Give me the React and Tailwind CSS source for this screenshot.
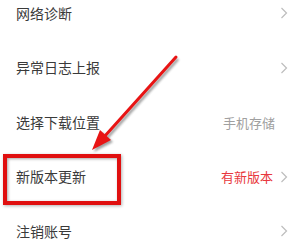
import React from "react";

const rows = [
  { label: "网络诊断" },
  { label: "异常日志上报" },
  { label: "选择下载位置", value: "手机存储", noArrow: true },
  { label: "新版本更新", value: "有新版本", red: true },
  { label: "注销账号" },
];

const Chevron = () => (
  <svg width="8" height="12" viewBox="0 0 8 12" className="ml-[7px] shrink-0">
    <path d="M1.5 1 L6.5 6 L1.5 11" fill="none" stroke="#bdbdbd" strokeWidth="1.2" />
  </svg>
);

export default function App() {
  return (
    <div
      className="relative w-[299px] h-[248px] overflow-hidden bg-white"
      style={{ fontFamily: '"Noto Sans CJK SC", "Noto Sans", sans-serif' }}
    >
      <div className="-mt-[14px]">
        {rows.map((row) => (
          <div key={row.label} className="h-[54.5px] flex items-center pl-[16px] pr-[11px]">
            <span className="flex-1 text-[14px] text-[#3a3a3a]">{row.label}</span>
            {row.value && (
              <span className={`text-[13px] ${row.red ? "text-[#e8383d]" : "text-[#a0a0a0]"}`}>
                {row.value}
              </span>
            )}
            {row.noArrow ? <span className="w-[13px]" /> : <Chevron />}
          </div>
        ))}
      </div>

      {/* annotation box */}
      <div className="absolute left-[3px] top-[154px] w-[118px] h-[51px] border-[4px] border-[#e01010] shadow-[inset_1px_1px_3px_rgba(0,0,0,0.35),1px_1px_3px_rgba(0,0,0,0.3)]" />

      {/* annotation arrow */}
      <svg className="absolute left-0 top-0" width="299" height="248" viewBox="0 0 299 248">
        <defs>
          <filter id="sh" x="-20%" y="-20%" width="140%" height="140%">
            <feGaussianBlur stdDeviation="1.2" />
          </filter>
        </defs>
        <g transform="translate(2 2)" opacity="0.45" filter="url(#sh)">
          <line x1="176" y1="57" x2="104" y2="137" stroke="#333" strokeWidth="3" />
          <polygon points="92,150 100,130 111,140" fill="#333" />
        </g>
        <line x1="176" y1="57" x2="104" y2="137" stroke="#e81414" strokeWidth="3" strokeLinecap="round" />
        <polygon points="92,150 100,130 111,140" fill="#e81414" />
      </svg>
    </div>
  );
}
